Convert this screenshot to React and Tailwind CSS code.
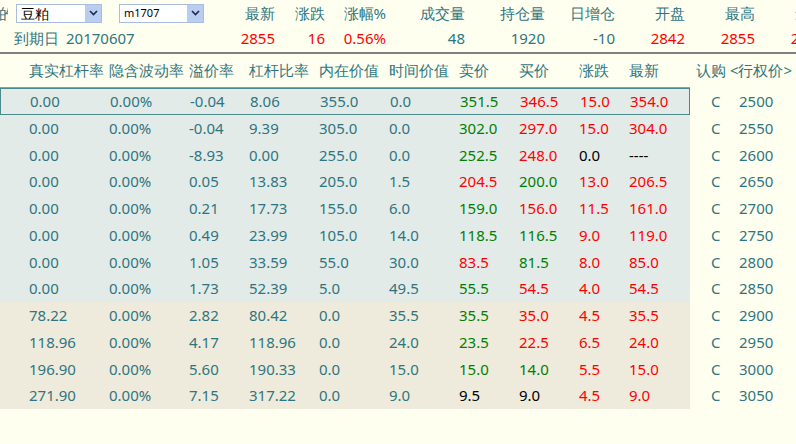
const rows = [
  ["0.00", "0.00%", "-0.04", "8.06", "355.0", "0.0", "351.5", "346.5", "15.0", "354.0", "2500", "g", "r", "r", "r"],
  ["0.00", "0.00%", "-0.04", "9.39", "305.0", "0.0", "302.0", "297.0", "15.0", "304.0", "2550", "g", "r", "r", "r"],
  ["0.00", "0.00%", "-8.93", "0.00", "255.0", "0.0", "252.5", "248.0", "0.0", "----", "2600", "g", "r", "k", "k"],
  ["0.00", "0.00%", "0.05", "13.83", "205.0", "1.5", "204.5", "200.0", "13.0", "206.5", "2650", "r", "g", "r", "r"],
  ["0.00", "0.00%", "0.21", "17.73", "155.0", "6.0", "159.0", "156.0", "11.5", "161.0", "2700", "g", "r", "r", "r"],
  ["0.00", "0.00%", "0.49", "23.99", "105.0", "14.0", "118.5", "116.5", "9.0", "119.0", "2750", "g", "g", "r", "r"],
  ["0.00", "0.00%", "1.05", "33.59", "55.0", "30.0", "83.5", "81.5", "8.0", "85.0", "2800", "r", "g", "r", "r"],
  ["0.00", "0.00%", "1.73", "52.39", "5.0", "49.5", "55.5", "54.5", "4.0", "54.5", "2850", "g", "r", "r", "r"],
  ["78.22", "0.00%", "2.82", "80.42", "0.0", "35.5", "35.5", "35.0", "4.5", "35.5", "2900", "g", "r", "r", "r"],
  ["118.96", "0.00%", "4.17", "118.96", "0.0", "24.0", "23.5", "22.5", "6.5", "24.0", "2950", "g", "r", "r", "r"],
  ["196.90", "0.00%", "5.60", "190.33", "0.0", "15.0", "15.0", "14.0", "5.5", "15.0", "3000", "g", "g", "r", "r"],
  ["271.90", "0.00%", "7.15", "317.22", "0.0", "9.0", "9.5", "9.0", "4.5", "9.0", "3050", "k", "k", "r", "r"],
];

const colorOf = { g: "text-[#008000]", r: "text-[#ff0000]", k: "text-black" };
const widths = ["w-[80px]", "w-[80px]", "w-[60px]", "w-[70px]", "w-[70px]", "w-[70px]", "w-[60px]", "w-[60px]", "w-[50px]", "w-[60px]"];

function Select({ label, w, mono }) {
  return (
    <div className={`flex h-[19px] items-center bg-white border border-[#a8bde0] ${w}`}>
      <span className={`flex-1 pl-1 text-black ${mono ? "text-[11px] font-['DejaVu_Sans_Mono']" : "text-[14px]"}`}>{label}</span>
      <span className="flex h-full w-[16px] items-center justify-center bg-[#b9cdf0]">
        <svg width="9" height="6" viewBox="0 0 9 6"><path d="M1 1l3.5 3.5L8 1" stroke="#1a2a50" strokeWidth="1.6" fill="none" /></svg>
      </span>
    </div>
  );
}

const heads = [["最新", "2855", true, 60], ["涨跌", "16", true, 50], ["涨幅%", "0.56%", true, 61], ["成交量", "48", false, 79], ["持仓量", "1920", false, 80], ["日增仓", "-10", false, 70], ["开盘", "2842", true, 70], ["最高", "2855", true, 70], ["最低", "2838", true, 70]];

export default function App() {
  return (
    <div className="h-[444px] w-[796px] overflow-hidden bg-[#fffff0] font-['Open_Sans','Noto_Sans_CJK_SC',sans-serif] text-[15px] text-[#2f7580]">
      <div className="flex h-[52px]">
        <div className="flex w-[215px] shrink-0 flex-col">
          <div className="flex h-[26px] items-center gap-[8px]">
            <span className="-ml-[1px] w-[9px] overflow-hidden">的</span>
            <Select label="豆粕" w="w-[86px]" />
            <span className="w-[1px]" />
            <Select label="m1707" w="w-[85px]" mono />
          </div>
          <div className="flex h-[24px] items-center gap-[7px] pl-[14px]">
            <span>到期日</span><span>20170607</span>
          </div>
        </div>
        {heads.map(([h, v, red, w], i) => (
          <div key={i} className="flex shrink-0 flex-col items-end" style={{ width: w }}>
            <div className="flex h-[26px] items-center whitespace-nowrap">{h}</div>
            <div className={`flex h-[24px] items-center ${red ? "text-[#ff0000]" : ""}`}>{v}</div>
          </div>
        ))}
      </div>
      <div className="h-[2px] bg-[#808080]" />
      <div className="flex h-[33px] items-center pl-[29px]">
        {["真实杠杆率", "隐含波动率", "溢价率", "杠杆比率", "内在价值", "时间价值", "卖价", "买价", "涨跌", "最新"].map((h, i) => (
          <div key={i} className={`${widths[i]} shrink-0 whitespace-nowrap`}>{h}</div>
        ))}
        <div className="ml-[7px] whitespace-nowrap">认购 &lt;行权价&gt; 认</div>
      </div>
      <div className="h-[1px] w-[690px] bg-[#9a9a9a]" />
      {rows.map((r, i) => (
        <div key={i} className="flex h-[26.75px]">
          <div className={`flex h-full w-[690px] shrink-0 items-center pl-[29px] ${i < 8 ? "bg-[#e3ebe8]" : "bg-[#eeebdc]"} ${i === 0 ? "border border-[#4a8a8c] pl-[28px]" : ""}`}>
            {r.slice(0, 10).map((c, j) => (
              <div key={j} className={`${widths[j]} shrink-0 ${j >= 6 ? colorOf[r[5 + j]] : ""}`}>{c}</div>
            ))}
          </div>
          <div className="flex items-center">
            <span className="w-[49px] pl-[21px]">C</span>
            <span>{r[10]}</span>
          </div>
        </div>
      ))}
    </div>
  );
}
